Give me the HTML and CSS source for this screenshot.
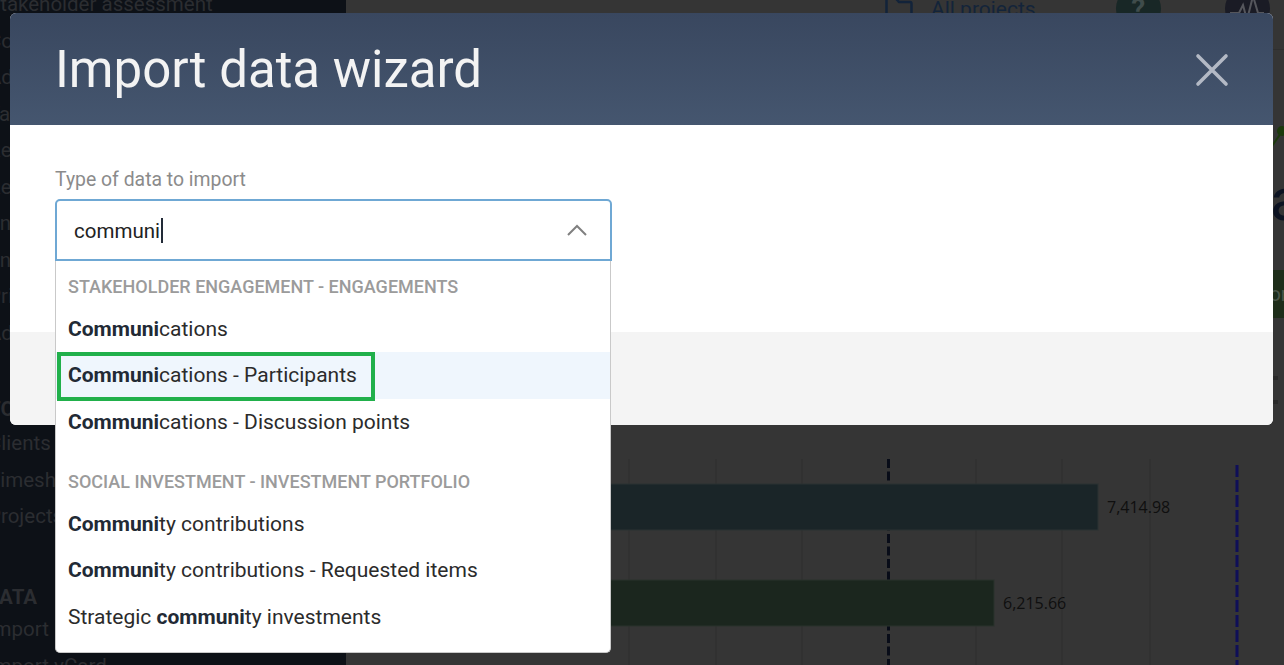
FILE: index.html
```html
<!DOCTYPE html>
<html lang="en">
<head>
  <meta charset="UTF-8" />
  <title>Import data wizard</title>
  <link rel="stylesheet" href="styles.css">
</head>
<body>

  <!-- Page behind the dialog -->
  <div class="page">
    <div class="sidebar">
      <div class="nav-item">Stakeholder assessment</div>
      <div class="nav-item">Consultation</div>
      <div class="nav-item">Advisory</div>
      <div class="nav-item">Tasks</div>
      <div class="nav-item">Reports</div>
      <div class="nav-item">Reviews</div>
      <div class="nav-item">Engagements</div>
      <div class="nav-item">Entities</div>
      <div class="nav-item">Priorities</div>
      <div class="nav-item">Additional</div>
      <div class="nav-title">TOOLS</div>
      <div class="nav-item">Clients</div>
      <div class="nav-item">Timesheets</div>
      <div class="nav-item">Projects</div>
      <div class="nav-title nav-title-data">DATA</div>
      <div class="nav-item">Import Excel</div>
      <div class="nav-item">Import vCard</div>
    </div>

    <div class="main">
      <div class="topbar">
        <svg class="folder" width="28" height="26" viewBox="0 0 28 26">
          <path d="M1.5 24V3.5Q1.5 1.5 3.5 1.5H10L14 6H25Q26.5 6 26.5 8V24Z" />
        </svg>
        <span class="topbar-link">All projects</span>
        <div class="circle circle-help">?</div>
        <div class="circle circle-user">
          <svg width="36" height="30" viewBox="0 0 36 30">
            <path d="M1 19H10L14 11L18 26L24 2L29 19H35" />
          </svg>
        </div>
      </div>

      <svg class="chart" width="938" height="615" viewBox="346 50 938 615">
        <g class="grid">
          <path d="M629 459V665M716 459V665M802 459V665M976 459V665M1062 459V665M1150 459V665" />
        </g>
        <path class="target" d="M888.5 459V665" />
        <path class="limit" d="M1237 465V665" />
        <rect class="bar-teal" x="400" y="484" width="698" height="46" />
        <rect class="bar-green" x="400" y="580" width="594" height="46" />
        <text class="bar-label" x="1107" y="513">7,414.98</text>
        <text class="bar-label" x="1003" y="609">6,215.66</text>

        <!-- bits that stick out right of the dialog -->
        <path class="spark" d="M1272 146L1281 133" />
        <circle class="spark-dot" cx="1282" cy="131" r="5" />
        <text class="big-number" x="1270" y="220">a</text>
        <rect class="side-button" x="1260" y="270" width="40" height="48" />
        <text class="side-button-text" x="1252" y="301">Mor</text>
        <rect class="tick" x="1260" y="376" width="18" height="4" />
        <rect class="tick" x="1260" y="400" width="18" height="4" />
      </svg>
    </div>
  </div>

  <!-- Dialog -->
  <div class="modal">
    <div class="modal-header">
      <div class="modal-title">Import data wizard</div>
      <svg class="modal-close" width="34" height="34" viewBox="0 0 34 34">
        <path d="M3 3L31 31M31 3L3 31" />
      </svg>
    </div>

    <div class="modal-body">
      <label class="field-label">Type of data to import</label>
      <div class="select-box">
        <span class="select-value">communi</span><span class="caret"></span>
        <svg class="chevron" width="22" height="14" viewBox="0 0 22 14">
          <path d="M2 12L11 3L20 12" />
        </svg>
      </div>

      <div class="dropdown">
        <div class="group">
          <div class="group-label">Stakeholder engagement - Engagements</div>
          <div class="option"><b>Communi</b>cations</div>
          <div class="option option-active">
            <b>Communi</b>cations - Participants
            <div class="callout"></div>
          </div>
          <div class="option"><b>Communi</b>cations - Discussion points</div>
        </div>
        <div class="group">
          <div class="group-label">Social investment - Investment portfolio</div>
          <div class="option"><b>Communi</b>ty contributions</div>
          <div class="option"><b>Communi</b>ty contributions - Requested items</div>
          <div class="option">Strategic <b>communi</b>ty investments</div>
        </div>
      </div>
    </div>

    <div class="modal-footer"></div>
  </div>

</body>
</html>
```

FILE: styles.css
```css
html, body {
  height: 100%;
}

body {
  margin: 0;
  overflow: hidden;
  font-family: Roboto, sans-serif;
  background: #353535;
}

.page {
  display: flex;
  height: 679px;
  margin-top: -14px;
}

.sidebar {
  width: 346px;
  flex-shrink: 0;
  overflow: hidden;
  background: #0d1117;
  color: #2b2d31;
  font-size: 20.5px;
}

.nav-item {
  height: 36.5px;
  line-height: 36.5px;
  margin-left: -12px;
  white-space: nowrap;
}

.nav-title {
  height: 33px;
  line-height: 34px;
  margin-top: 41px;
  margin-left: -12px;
  font-weight: 700;
}

.nav-title-data {
  height: 31.5px;
  margin-top: 45px;
  margin-left: -14px;
}

.main {
  flex: 1;
  min-width: 0;
}

.topbar {
  display: flex;
  align-items: center;
  height: 64px;
  padding-bottom: 18px;
  box-sizing: border-box;
  border-bottom: 1px solid #2f2f2f;
}

.folder {
  margin-left: 539px;
  fill: none;
  stroke: #12233a;
  stroke-width: 2.5;
}

.topbar-link {
  margin-left: 18px;
  font-size: 21px;
  color: #13243a;
}

.circle {
  width: 45px;
  height: 45px;
  border-radius: 50%;
  display: flex;
  align-items: center;
  justify-content: center;
  flex-shrink: 0;
}

.circle-help {
  margin-left: 80px;
  background: #182726;
  color: #3f4c4b;
  font-size: 28px;
  font-weight: 700;
}

.circle-user {
  margin-left: 64px;
  background: #1a1b25;
}

.circle-user path {
  fill: none;
  stroke: #55565c;
  stroke-width: 2;
}

.chart {
  display: block;
}

.grid path {
  stroke: #2e2e2e;
  stroke-width: 1;
}

.target {
  stroke: #080c18;
  stroke-width: 3;
  stroke-dasharray: 9 3.5;
}

.limit {
  stroke: #0f0f58;
  stroke-width: 3;
  stroke-dasharray: 12 3;
}

.bar-teal {
  fill: #1a2528;
  stroke: #2b3233;
}

.bar-green {
  fill: #1b261e;
  stroke: #2b332c;
}

.bar-label {
  font-family: "Open Sans", sans-serif;
  font-size: 16px;
  fill: #0f0f0f;
}

.spark {
  stroke: #1c3a0c;
  stroke-width: 2;
}

.spark-dot {
  fill: #1c3a0c;
}

.big-number {
  font-size: 60px;
  fill: #0c1322;
}

.side-button {
  fill: #1e2d1a;
}

.side-button-text {
  font-size: 20px;
  fill: #4a5648;
}

.tick {
  fill: #2a2a2a;
}

/* dialog */
.modal {
  position: absolute;
  top: 13px;
  left: 10px;
  width: 1263px;
  height: 412px;
  display: flex;
  flex-direction: column;
  border-radius: 6px;
  background: #fff;
}

.modal-header {
  height: 112px;
  flex-shrink: 0;
  display: flex;
  align-items: center;
  justify-content: space-between;
  padding: 0 44px 0 45px;
  box-sizing: border-box;
  border-radius: 6px 6px 0 0;
  background: linear-gradient(#39475f, #45566f);
}

.modal-title {
  font-size: 51px;
  color: #f3f3f3;
}

.modal-close {
  margin-top: 1px;
  fill: none;
  stroke: #b3b9c5;
  stroke-width: 3.6;
  stroke-linecap: round;
}

.modal-body {
  flex: 1;
  position: relative;
  padding: 42px 45px 0;
}

.field-label {
  display: block;
  height: 32px;
  line-height: 26px;
  font-size: 19.4px;
  color: #8b8b8b;
}

.select-box {
  width: 557px;
  height: 62px;
  display: flex;
  align-items: center;
  padding: 0 22px 0 17px;
  box-sizing: border-box;
  border: 2px solid #6fa8d4;
  border-radius: 5px 5px 0 0;
  background: #fff;
}

.select-value {
  margin-top: 2px;
  font-size: 20.5px;
  color: #222;
}

.caret {
  width: 2px;
  height: 25px;
  margin-left: 1px;
  background: #222b38;
}

.chevron {
  margin-left: auto;
  fill: none;
  stroke: #808080;
  stroke-width: 2;
}

.dropdown {
  position: absolute;
  top: 136px;
  left: 45px;
  width: 556px;
  height: 392px;
  box-sizing: border-box;
  border: 1px solid #c9c9c9;
  border-top: 0;
  border-radius: 0 0 5px 5px;
  background: #fff;
}

.group {
  padding-bottom: 19.5px;
}

.group-label {
  height: 44.5px;
  line-height: 51px;
  padding-left: 12px;
  font-size: 18px;
  font-weight: 500;
  text-transform: uppercase;
  color: #9b9b9b;
}

.group + .group .group-label {
  height: 36px;
  line-height: 34px;
}

.option {
  position: relative;
  height: 46.5px;
  line-height: 46.5px;
  padding-left: 12px;
  font-size: 21px;
  color: #2b2b2b;
}

.option b {
  font-weight: 700;
  color: #222a35;
}

.option-active {
  background: #eff6fd;
}

.callout {
  position: absolute;
  top: 0;
  left: 1px;
  width: 318px;
  height: 49px;
  box-sizing: border-box;
  border: 4.5px solid #21b04b;
}

.modal-footer {
  height: 93px;
  flex-shrink: 0;
  border-radius: 0 0 6px 6px;
  background: #f4f4f4;
}
```
